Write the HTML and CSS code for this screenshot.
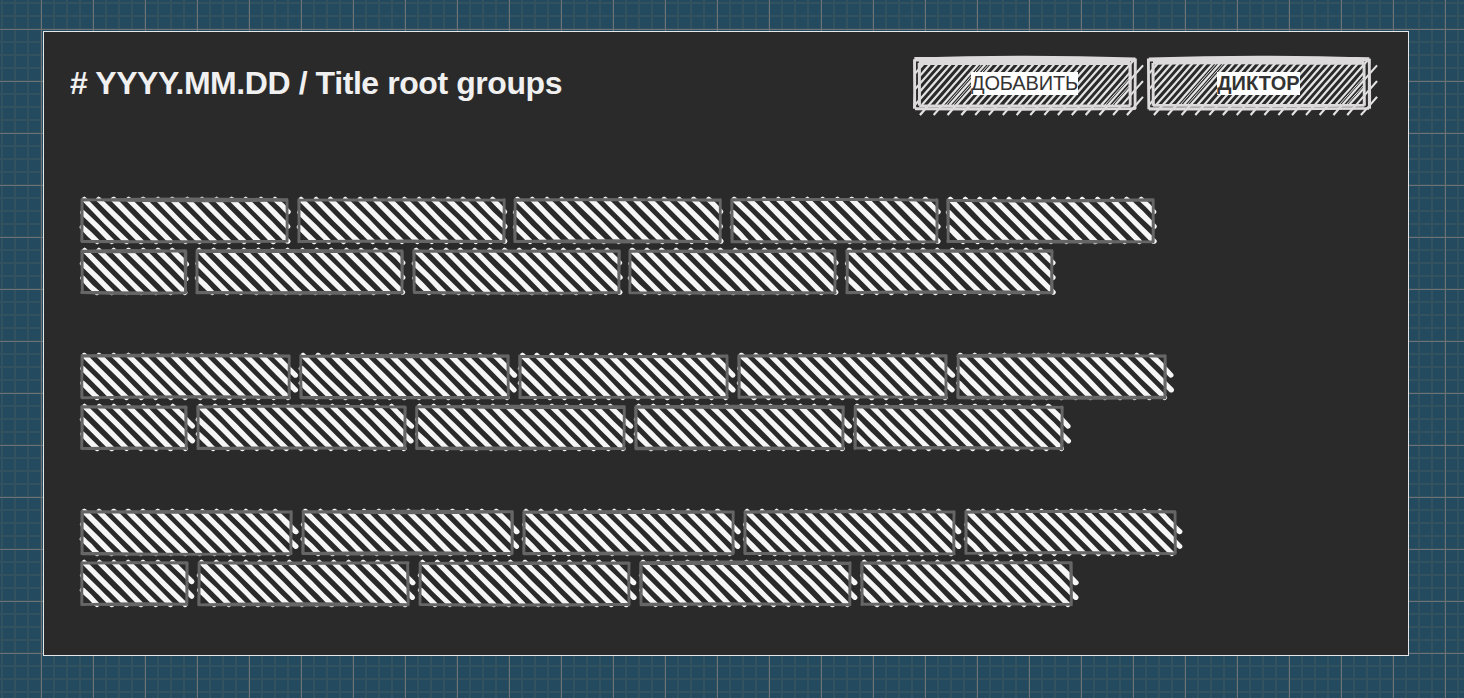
FILE: index.html
```html
<!DOCTYPE html>
<html lang="ru">
<head>
<meta charset="utf-8">
<title>Title root groups</title>
<link rel="stylesheet" href="styles.css">
</head>
<body>
<main class="panel">
  <header class="header">
    <h1 class="title"># YYYY.MM.DD / Title root groups</h1>
    <div class="actions">
      <button class="sketch-button"><span class="label">ДОБАВИТЬ</span></button>
      <button class="sketch-button"><span class="label strong">ДИКТОР</span></button>
    </div>
  </header>
  <section class="groups">
    <div class="group group-a" data-width="205" data-short="103.5" data-extra="0.8"></div>
    <div class="group group-b" data-width="207" data-short="104" data-extra="6.2"></div>
    <div class="group group-c" data-width="209" data-short="105" data-extra="4.7"></div>
  </section>
</main>
<script src="sketch.js"></script>
</body>
</html>
```
FILE: styles.css
```css
* { box-sizing: border-box; }

body {
  margin: 0;
  height: 698px;
  overflow: hidden;
  padding: 31px 55px 42px 43px;
  font-family: "Liberation Sans", Arial, sans-serif;
  background-color: #234a5e;
  background-image:
    linear-gradient(90deg, #6c7276 1px, transparent 1px),
    linear-gradient(#6c7276 1px, transparent 1px),
    linear-gradient(90deg, #33525f 2px, transparent 2px),
    linear-gradient(#33525f 2px, transparent 2px);
  background-size: 52px 52px, 52px 52px, 13px 13px, 13px 13px;
  background-position: 41px 0, 0 29px, 1px 0, 0 2px;
}

.panel {
  width: 1366px;
  height: 625px;
  padding: 23px 37.5px 0 26px;
  border: 1px solid #e4e8ea;
  background: #2a2a2a;
}

.header {
  display: flex;
  justify-content: space-between;
  height: 145px;
}

.title {
  margin: 9px 0 0;
  font-size: 32px;
  line-height: 38px;
  font-weight: 700;
  letter-spacing: -0.42px;
  color: #f0f0f0;
  white-space: nowrap;
}

.actions {
  display: flex;
  gap: 10px;
  align-items: flex-start;
  padding-top: 2px;
}

.sketch-button {
  position: relative;
  display: flex;
  justify-content: center;
  align-items: center;
  width: 224px;
  height: 53px;
  padding: 0;
  border: 0;
  background: none;
  font: 20px/23px "Liberation Sans", Arial, sans-serif;
}

.sketch-button svg {
  position: absolute;
  inset: 0;
  overflow: visible;
}

.label {
  position: relative;
  color: #333;
  background: #fff;
  white-space: nowrap;
  letter-spacing: -0.15px;
}

.strong { font-weight: 700; letter-spacing: 0.1px; }

.groups {
  display: flex;
  flex-direction: column;
  gap: 63.5px;
  padding-left: 12.4px;
}

.group {
  display: flex;
  flex-direction: column;
  gap: 9.5px;
}

.row { display: flex; }

.group-a .row { gap: 11.5px; }
.group-b .row { gap: 11.8px; }
.group-c .row { gap: 12px; }

.brick {
  display: block;
  flex: none;
  height: 41.5px;
  overflow: visible;
}

.hatch { fill: none; stroke: #f6f6f6; stroke-width: 5; stroke-linecap: round; }
.outline { fill: none; stroke: #666; stroke-width: 2.8; stroke-linecap: round; }
.button-hatch { fill: none; stroke: #e4e4e4; stroke-width: 2; }
.button-hatch.fine { stroke-width: 1; }
.button-frame { fill: none; stroke: #dcdadb; stroke-width: 2.8; }
```
FILE: sketch.js
```js
let seed = 17;
function jitter(amount) {
  seed = (seed * 16807) % 2147483647;
  return (seed / 2147483647 - 0.5) * 2 * amount;
}

// Hand-drawn edge: two slightly bowed passes.
function edge(x1, y1, x2, y2, bow) {
  let d = '';
  for (let i = 0; i < 2; i++) {
    const b = jitter(bow);
    const horizontal = y1 === y2;
    const mx = (x1 + x2) / 2 + (horizontal ? 0 : b);
    const my = (y1 + y2) / 2 + (horizontal ? b : 0);
    d += `M${x1 + jitter(0.4)} ${y1 + jitter(0.4)}Q${mx} ${my} ${x2 + jitter(0.4)} ${y2 + jitter(0.4)}`;
  }
  return d;
}

function frame(x, y, w, h, bow) {
  return edge(x, y, x + w, y, bow) + edge(x + w, y, x + w, y + h, 0.6)
    + edge(x + w, y + h, x, y + h, bow) + edge(x, y + h, x, y, 0.6);
}

// Parallel strokes; dir 1 runs down-right, dir -1 runs up-right.
function hatch(x0, y0, x1, y1, start, step, slope, dir, wobble, last) {
  let d = '';
  for (let c = start - step * 40; c < x1 + 100; c += step) {
    if (c > last) break;
    const at = y => dir === 1 ? c + (y - y0) / slope : c + (y1 - y) / slope;
    const yAt = x => dir === 1 ? y0 + (x - c) * slope : y1 - (x - c) * slope;
    let ax = at(dir === 1 ? y0 : y1), ay = dir === 1 ? y0 : y1;
    let bx = at(dir === 1 ? y1 : y0), by = dir === 1 ? y1 : y0;
    if (bx < x0 || ax > x1) continue;
    if (ax < x0) { ax = x0; ay = yAt(x0); }
    if (bx > x1) { bx = x1; by = yAt(x1); }
    for (let i = 0; i < 2; i++) {
      const j = jitter(wobble);
      d += `M${ax + jitter(wobble * 0.6)} ${ay}Q${(ax + bx) / 2 + j} ${(ay + by) / 2 - j * dir} ${bx + jitter(wobble * 0.6)} ${by}`;
    }
  }
  return d;
}

function brick(w, extra) {
  const h = 41.5;
  return `<svg class="brick" width="${w}" height="${h}">`
    + `<path class="hatch" d="${hatch(0.6, -0.6, w + extra, h, 2.3, 14.7, 1, 1, 0.8, w - 3)}"/>`
    + `<path class="outline" d="${frame(0, 0, w, h, 2)}"/></svg>`;
}

document.querySelectorAll('.group').forEach(group => {
  const w = +group.dataset.width, s = +group.dataset.short, e = +group.dataset.extra;
  group.innerHTML = [[w, w, w, w, w], [s, w, w, w, w]]
    .map(row => `<div class="row">${row.map(x => brick(x, e)).join('')}</div>`).join('');
});

document.querySelectorAll('.sketch-button').forEach(button => {
  button.insertAdjacentHTML('afterbegin', `<svg width="224" height="53">
    <path class="button-hatch" d="${hatch(2, 2, 230, 58, 7, 13.8, 1.138, -1, 0.3, 220)}"/>
    <path class="button-hatch" d="${hatch(6, 6, 217, 48, 22.7, 13.8, 1.138, -1, 0.4, 216)}"/>
    <path class="button-hatch fine" d="M33 48L70 6M40 48L77 6M192 48L217 20M199 48L217 28"/>
    <path class="button-frame" d="${frame(1.7, 1.8, 220.6, 50, 1)}M2 2Q112 -1.5 222 2M2 3Q112 2 222 3"/>
    <path class="button-frame" d="${frame(6.2, 6, 211, 42.5, 0.8)}M6 5Q112 2 217 5"/>
  </svg>`);
});
```
